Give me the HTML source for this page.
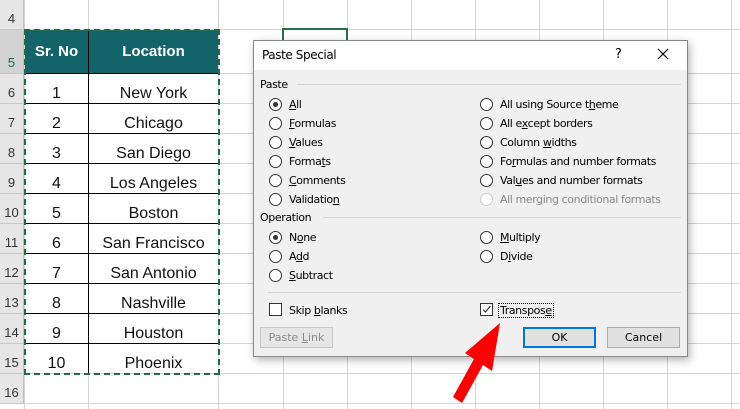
<!DOCTYPE html>
<html><head><meta charset="utf-8"><style>
*{margin:0;padding:0;box-sizing:border-box}
body{width:740px;height:409px;overflow:hidden;background:#fff;position:relative;font-family:"Liberation Sans",Arial,sans-serif}
.a{position:absolute}
.rh{position:absolute;left:0;width:24px;background:#e6e6e6;border-bottom:1px solid #c8c8c8;border-right:1px solid #c0c0c0;font-size:13px;color:#333;display:flex;align-items:flex-end;justify-content:center;padding-bottom:3px}
.hl{position:absolute;left:24px;right:0;height:1px;background:#d4d4d4}
.vl{position:absolute;top:0;bottom:0;width:1px;background:#d4d4d4}
.cell{position:absolute;font-size:16px;color:#111;display:flex;align-items:center;justify-content:center}
.d{position:absolute;font-family:"DejaVu Sans",sans-serif;font-size:11px;color:#000;letter-spacing:-0.4px;margin-top:1px}
.r{position:absolute;width:13px;height:13px;border:1px solid #333;border-radius:50%;background:#fff;margin-top:1px}
.r.on::after{content:"";position:absolute;left:3px;top:3px;width:5px;height:5px;border-radius:50%;background:#333}
u{text-decoration:underline}
.btn{position:absolute;height:21px;background:#e1e1e1;border:1px solid #adadad;font-family:"DejaVu Sans",sans-serif;font-size:11px;display:flex;align-items:center;justify-content:center}
</style></head><body>
<div class="vl" style="left:24px"></div>
<div class="vl" style="left:88px"></div>
<div class="vl" style="left:218px"></div>
<div class="vl" style="left:283px"></div>
<div class="vl" style="left:347px"></div>
<div class="vl" style="left:411px"></div>
<div class="vl" style="left:475px"></div>
<div class="vl" style="left:539px"></div>
<div class="vl" style="left:603px"></div>
<div class="vl" style="left:667px"></div>
<div class="vl" style="left:731px"></div>
<div class="hl" style="top:29px"></div>
<div class="hl" style="top:73px"></div>
<div class="hl" style="top:103px"></div>
<div class="hl" style="top:133px"></div>
<div class="hl" style="top:163px"></div>
<div class="hl" style="top:193px"></div>
<div class="hl" style="top:223px"></div>
<div class="hl" style="top:253px"></div>
<div class="hl" style="top:283px"></div>
<div class="hl" style="top:313px"></div>
<div class="hl" style="top:343px"></div>
<div class="hl" style="top:373px"></div>
<div class="hl" style="top:403px"></div>
<div class="rh" style="top:0;height:30px">4</div>
<div class="rh" style="top:30px;height:44px;background:#d2d2d2;color:#1e6b46">5</div>
<div class="rh" style="top:74px;height:30px">6</div>
<div class="rh" style="top:104px;height:30px">7</div>
<div class="rh" style="top:134px;height:30px">8</div>
<div class="rh" style="top:164px;height:30px">9</div>
<div class="rh" style="top:194px;height:30px">10</div>
<div class="rh" style="top:224px;height:30px">11</div>
<div class="rh" style="top:254px;height:30px">12</div>
<div class="rh" style="top:284px;height:30px">13</div>
<div class="rh" style="top:314px;height:30px">14</div>
<div class="rh" style="top:344px;height:30px">15</div>
<div class="rh" style="top:374px;height:30px">16</div>
<div class="a" style="left:282px;top:28px;width:66px;height:46px;border:2px solid #217346"></div>
<div class="a" style="left:25px;top:30px;width:193px;height:43px;background:#136469"></div>
<div class="cell" style="left:25px;top:30px;width:63px;height:43px;color:#fff;font-weight:bold;font-size:15px">Sr. No</div>
<div class="cell" style="left:89px;top:30px;width:129px;height:43px;color:#fff;font-weight:bold;font-size:15px">Location</div>
<div class="a" style="left:88px;top:30px;width:1px;height:343px;background:#000"></div>
<div class="cell" style="left:25px;top:79px;width:63px;height:30px">1</div><div class="cell" style="left:89px;top:79px;width:129px;height:30px">New York</div>
<div class="cell" style="left:25px;top:109px;width:63px;height:30px">2</div><div class="cell" style="left:89px;top:109px;width:129px;height:30px">Chicago</div>
<div class="cell" style="left:25px;top:139px;width:63px;height:30px">3</div><div class="cell" style="left:89px;top:139px;width:129px;height:30px">San Diego</div>
<div class="cell" style="left:25px;top:169px;width:63px;height:30px">4</div><div class="cell" style="left:89px;top:169px;width:129px;height:30px">Los Angeles</div>
<div class="cell" style="left:25px;top:199px;width:63px;height:30px">5</div><div class="cell" style="left:89px;top:199px;width:129px;height:30px">Boston</div>
<div class="cell" style="left:25px;top:229px;width:63px;height:30px">6</div><div class="cell" style="left:89px;top:229px;width:129px;height:30px">San Francisco</div>
<div class="cell" style="left:25px;top:259px;width:63px;height:30px">7</div><div class="cell" style="left:89px;top:259px;width:129px;height:30px">San Antonio</div>
<div class="cell" style="left:25px;top:289px;width:63px;height:30px">8</div><div class="cell" style="left:89px;top:289px;width:129px;height:30px">Nashville</div>
<div class="cell" style="left:25px;top:319px;width:63px;height:30px">9</div><div class="cell" style="left:89px;top:319px;width:129px;height:30px">Houston</div>
<div class="cell" style="left:25px;top:349px;width:63px;height:30px">10</div><div class="cell" style="left:89px;top:349px;width:129px;height:30px">Phoenix</div>
<div class="a" style="left:25px;top:73px;width:193px;height:1px;background:#000"></div>
<div class="a" style="left:25px;top:103px;width:193px;height:1px;background:#000"></div>
<div class="a" style="left:25px;top:133px;width:193px;height:1px;background:#000"></div>
<div class="a" style="left:25px;top:163px;width:193px;height:1px;background:#000"></div>
<div class="a" style="left:25px;top:193px;width:193px;height:1px;background:#000"></div>
<div class="a" style="left:25px;top:223px;width:193px;height:1px;background:#000"></div>
<div class="a" style="left:25px;top:253px;width:193px;height:1px;background:#000"></div>
<div class="a" style="left:25px;top:283px;width:193px;height:1px;background:#000"></div>
<div class="a" style="left:25px;top:313px;width:193px;height:1px;background:#000"></div>
<div class="a" style="left:25px;top:343px;width:193px;height:1px;background:#000"></div>
<div class="a" style="left:24px;top:29px;width:196px;height:346px;border:2px dashed #1e6b46"></div>
<div class="a" style="left:253px;top:40px;width:435px;height:317px;background:#f0f0f0;border:1px solid #888;box-shadow:2px 3px 8px rgba(0,0,0,.3)"></div>
<div class="a" style="left:254px;top:41px;width:433px;height:29px;background:#fff"></div>
<div class="d" style="left:262px;top:47px;font-size:12px">Paste Special</div>
<div class="d" style="left:615px;top:46px;font-size:13px">?</div>
<svg class="a" style="left:657px;top:48px" width="12" height="12"><path d="M1 1L11 11M11 1L1 11" stroke="#000" stroke-width="1.2"/></svg>
<div class="d" style="left:260px;top:77px">Paste</div>
<div class="a" style="left:297px;top:84px;width:384px;height:1px;background:#d5d5d5"></div>
<div class="r on" style="left:269px;top:97px"></div><div class="d" style="left:289px;top:97px"><u>A</u>ll</div>
<div class="r" style="left:269px;top:116px"></div><div class="d" style="left:289px;top:116px"><u>F</u>ormulas</div>
<div class="r" style="left:269px;top:135px"></div><div class="d" style="left:289px;top:135px"><u>V</u>alues</div>
<div class="r" style="left:269px;top:154px"></div><div class="d" style="left:289px;top:154px">Forma<u>t</u>s</div>
<div class="r" style="left:269px;top:173px"></div><div class="d" style="left:289px;top:173px"><u>C</u>omments</div>
<div class="r" style="left:269px;top:192px"></div><div class="d" style="left:289px;top:192px">Validatio<u>n</u></div>
<div class="r" style="left:480px;top:97px"></div><div class="d" style="left:500px;top:97px">All using Source t<u>h</u>eme</div>
<div class="r" style="left:480px;top:116px"></div><div class="d" style="left:500px;top:116px">All e<u>x</u>cept borders</div>
<div class="r" style="left:480px;top:135px"></div><div class="d" style="left:500px;top:135px">Column <u>w</u>idths</div>
<div class="r" style="left:480px;top:154px"></div><div class="d" style="left:500px;top:154px">Fo<u>r</u>mulas and number formats</div>
<div class="r" style="left:480px;top:173px"></div><div class="d" style="left:500px;top:173px">Val<u>u</u>es and number formats</div>
<div class="r" style="left:480px;top:192px;border-color:#ccc"></div><div class="d" style="left:500px;top:192px;color:#8a8a8a">All mer<u>g</u>ing conditional formats</div>
<div class="d" style="left:260px;top:210px">Operation</div>
<div class="a" style="left:323px;top:217px;width:358px;height:1px;background:#d5d5d5"></div>
<div class="r on" style="left:269px;top:230px"></div><div class="d" style="left:289px;top:230px">N<u>o</u>ne</div>
<div class="r" style="left:269px;top:249px"></div><div class="d" style="left:289px;top:249px">A<u>d</u>d</div>
<div class="r" style="left:269px;top:268px"></div><div class="d" style="left:289px;top:268px"><u>S</u>ubtract</div>
<div class="r" style="left:480px;top:230px"></div><div class="d" style="left:500px;top:230px"><u>M</u>ultiply</div>
<div class="r" style="left:480px;top:249px"></div><div class="d" style="left:500px;top:249px">D<u>i</u>vide</div>
<div class="a" style="left:268px;top:292px;width:413px;height:1px;background:#d5d5d5"></div>
<div class="a" style="left:269px;top:303px;width:13px;height:13px;border:1px solid #333;background:#fff"></div>
<div class="d" style="left:289px;top:303px">Skip <u>b</u>lanks</div>
<div class="a" style="left:480px;top:303px;width:13px;height:13px;border:1px solid #333;background:#fff"></div>
<svg class="a" style="left:481px;top:304px" width="11" height="11"><path d="M2 5.5L4.5 8L9.5 2" stroke="#333" stroke-width="1.2" fill="none"/></svg>
<div class="d" style="left:498px;top:302px;border:1px dotted #000;padding:0 1px">Transpos<u>e</u></div>
<div class="btn" style="left:260px;top:327px;width:73px;color:#8a8a8a;background:#e6e6e6;border-color:#c6c6c6"><span>Paste <u>L</u>ink</span></div>
<div class="btn" style="left:523px;top:327px;width:73px;border:2px solid #0078d7">OK</div>
<div class="btn" style="left:607px;top:327px;width:73px">Cancel</div>
<svg class="a" style="left:0;top:0" width="740" height="409"><polygon points="500,323 492,371 483,365 462,403 453,397 474,359 465,353" fill="#ff0000"/></svg>
</body></html>
